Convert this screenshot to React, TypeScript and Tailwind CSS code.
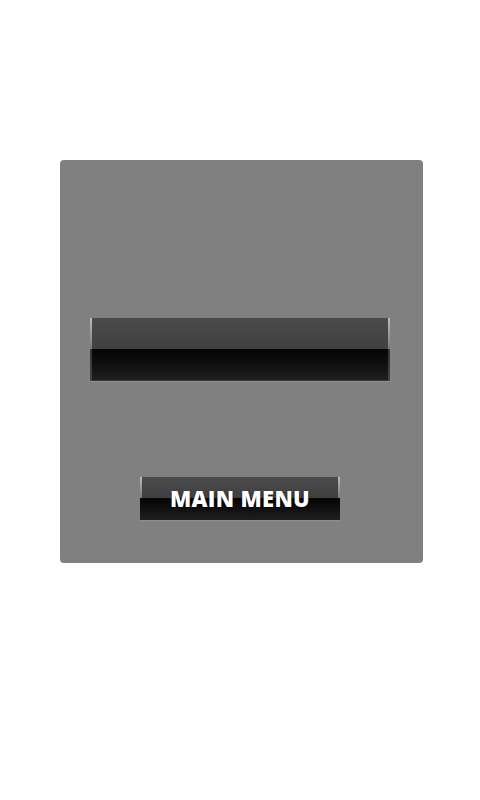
export default function App() {
  return (
    <div className="w-[480px] h-[800px] bg-white pt-[160px] pl-[60px]">
      <div className="w-[363px] h-[403px] bg-[#808080] rounded-[4px] flex flex-col items-start">
        <div className="h-[158px]" />
        <div className="relative ml-[30px] w-[300px] h-[63px] flex flex-col shadow-[0_1px_1px_rgba(150,150,150,0.6)]">
          <div className="h-[31px] bg-gradient-to-b from-[#4b4b4b] to-[#404040]" />
          <div className="flex-1 bg-gradient-to-b from-[#050505] to-[#1f1f1f] border-b border-[#3a3a3a]" />
          <div className="absolute left-0 top-0 w-[2px] h-[31px] bg-gradient-to-b from-[#bdbdbd] to-[#7a7a7a]" />
          <div className="absolute left-0 top-[31px] w-[2px] h-[32px] bg-gradient-to-b from-[#333] to-[#444]" />
          <div className="absolute right-0 top-0 w-[2px] h-[31px] bg-gradient-to-b from-[#bdbdbd] to-[#7a7a7a]" />
          <div className="absolute right-0 top-[31px] w-[2px] h-[32px] bg-gradient-to-b from-[#333] to-[#444]" />
        </div>
        <div className="h-[96px]" />
        <button className="relative ml-[80px] w-[200px] h-[43px] flex flex-col overflow-hidden shadow-[0_1px_1px_rgba(150,150,150,0.6)]">
          <div className="h-[21px] bg-gradient-to-b from-[#4b4b4b] to-[#404040]" />
          <div className="flex-1 bg-gradient-to-b from-[#050505] to-[#1f1f1f]" />
          <div className="absolute left-0 top-0 w-[2px] h-[21px] bg-gradient-to-b from-[#bdbdbd] to-[#7a7a7a]" />
          <div className="absolute right-0 top-0 w-[2px] h-[21px] bg-gradient-to-b from-[#bdbdbd] to-[#7a7a7a]" />
          <span className="absolute inset-0 flex items-center justify-center text-white text-[22px] font-extrabold tracking-[0.3px] font-['Open_Sans',sans-serif] [text-shadow:0_1px_2px_rgba(0,0,0,0.9)]">
            MAIN MENU
          </span>
        </button>
      </div>
    </div>
  );
}
